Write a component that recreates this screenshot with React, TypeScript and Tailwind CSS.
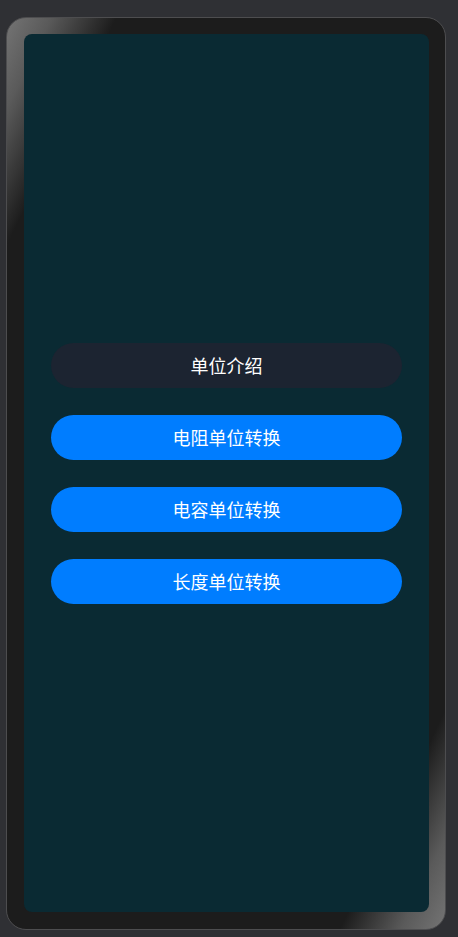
const buttons = ["电阻单位转换", "电容单位转换", "长度单位转换"];

export default function App() {
  return (
    <div
      className="w-[458px] h-[937px] bg-[#2f3034] pt-[17px] pl-[6px] pr-[12px] pb-[7px]"
      style={{ fontFamily: '"Noto Sans CJK SC", "Noto Sans", sans-serif' }}
    >
      <div className="h-full w-full rounded-[20px] border border-[#4d4d4f] bg-[linear-gradient(to_bottom_right,#747474_0%,#5a5a5a_5%,#1c1c1c_12.5%,#1c1c1c_88%,#5a5a5a_95%,#747474_100%)] pt-[16px] pl-[17px] pr-[16px] pb-[17px]">
        <div className="h-full w-full rounded-[8px] bg-[#0a2a33] flex flex-col items-center justify-center gap-[27px] px-[27px]">
          <button className="w-full h-[45px] rounded-full bg-[#1c2431] text-white text-[18px] font-normal">
            单位介绍
          </button>
          {buttons.map((label) => (
            <button
              key={label}
              className="w-full h-[45px] rounded-full bg-[#007dff] text-white text-[18px] font-normal"
            >
              {label}
            </button>
          ))}
        </div>
      </div>
    </div>
  );
}
